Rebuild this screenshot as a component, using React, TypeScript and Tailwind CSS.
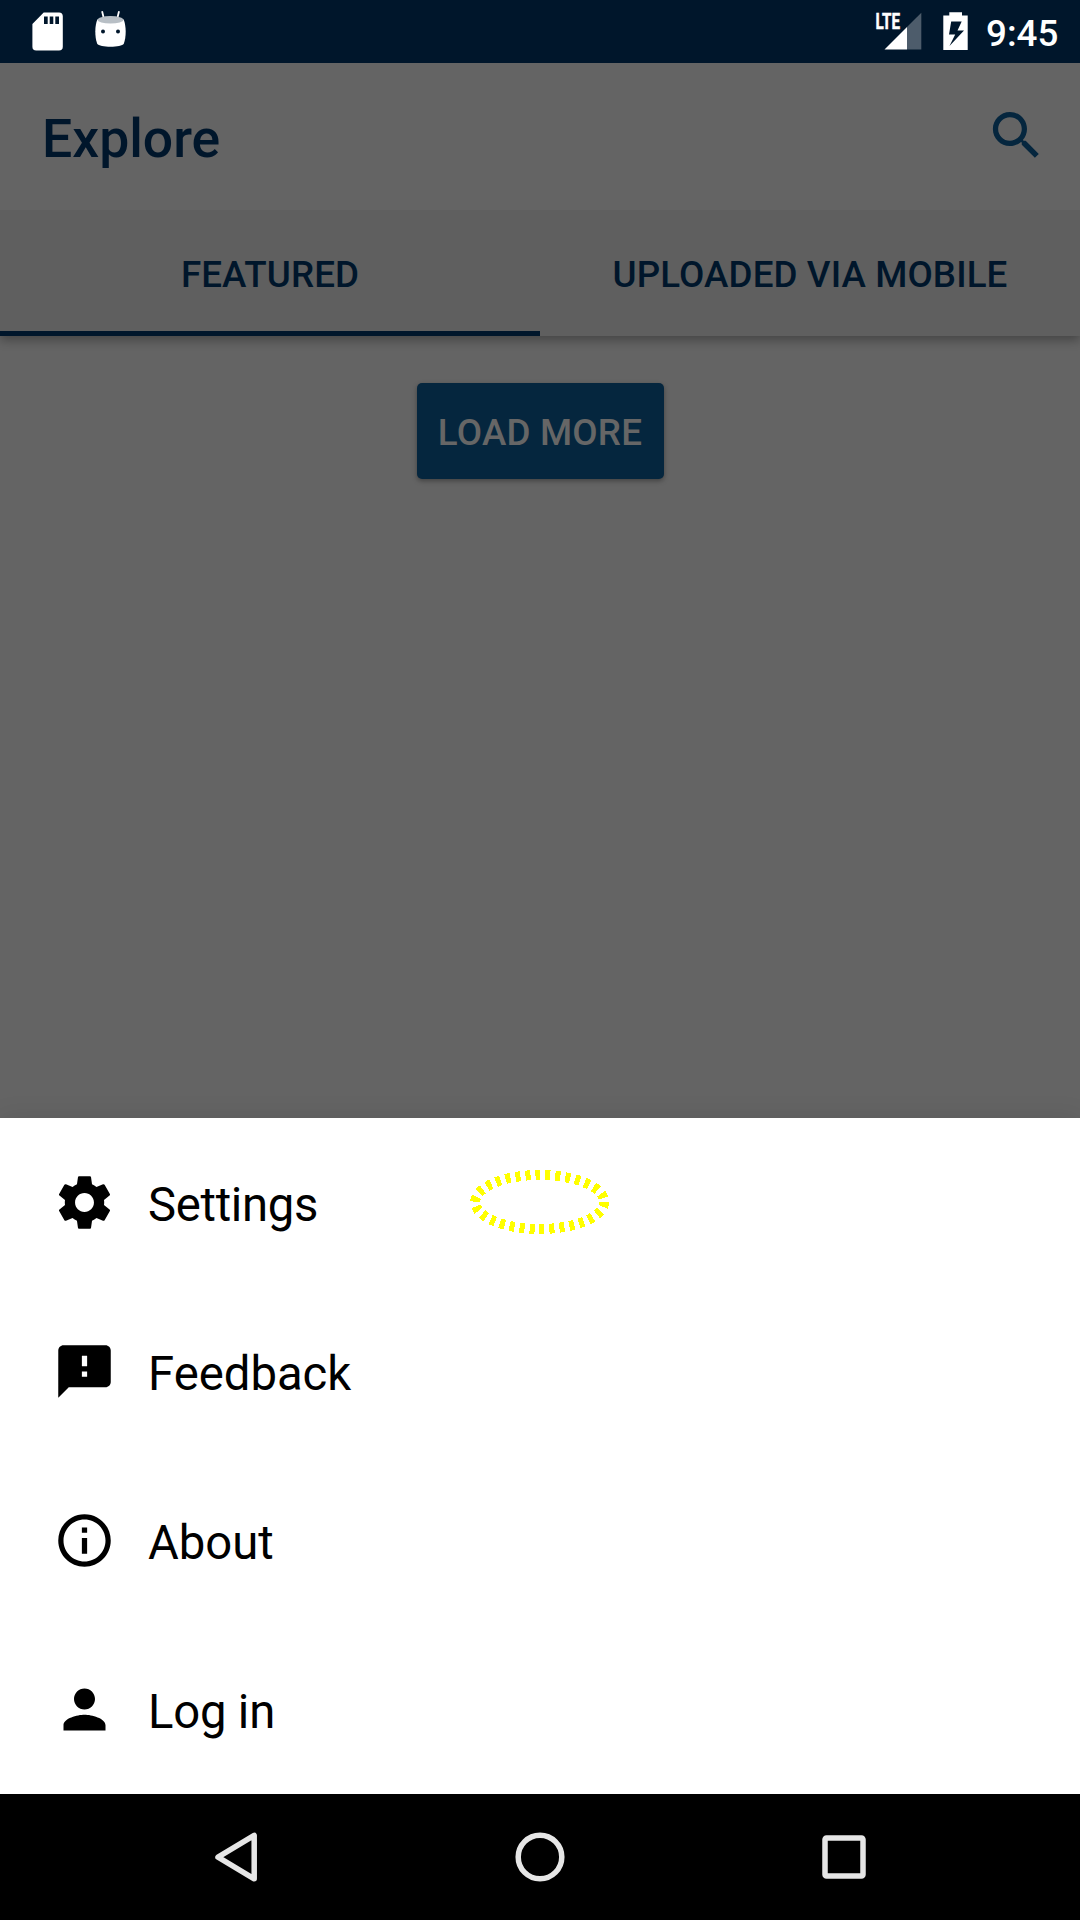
import type { ReactNode } from "react";

function Icon({ className, children }: { className: string; children: ReactNode }) {
  return (
    <svg viewBox="0 0 24 24" fill="currentColor" className={className}>
      {children}
    </svg>
  );
}

function StatusBar() {
  return (
    <header className="flex h-[63px] shrink-0 items-start justify-between bg-[#00162b] text-white">
      <svg width="140" height="63" viewBox="0 0 140 63">
        <path
          fill="#fff"
          fillRule="evenodd"
          d="M43.7 12.5H59a3.8 3.8 0 0 1 3.8 3.8v30.4a3.8 3.8 0 0 1-3.8 3.8H36.2a3.8 3.8 0 0 1-3.8-3.8V23.9zM44 16.5V24h3.7v-7.5zm5.7 0V24h3.6v-7.5zm5.6 0V24H59v-7.5z"
        />
        <path d="M102.200 11.800l1.700 7M118.900 11.800l-1.700 7" stroke="#fff" strokeWidth="1.800" strokeLinecap="round" />
        <path
          fill="#fff"
          d="M97.300 19.500h26.400c1.200 3 2 7.500 2 12 0 4.500-.6 9-1.900 12.200-1.300 2-7 3-13.300 3s-12-1-13.300-3c-1.300-3.200-1.900-7.700-1.900-12.200 0-4.500.8-9 2-12z"
        />
        <ellipse cx="110.500" cy="19.800" rx="13" ry="3.700" fill="#b8bfc5" />
        <circle cx="103" cy="31.500" r="2" fill="#00162b" />
        <circle cx="118" cy="31.500" r="2" fill="#00162b" />
      </svg>
      <div className="flex pr-[25px]">
        <svg width="110" height="63" viewBox="870 0 110 63">
          <text
            x="875.500"
            y="29"
            fill="#fff"
            stroke="#fff"
            strokeWidth="0.500"
            fontSize="21.500"
            fontWeight="700"
            fontFamily="Roboto, sans-serif"
            textLength="24.500"
            lengthAdjust="spacingAndGlyphs"
          >
            LTE
          </text>
          <path d="M907 27L921.300 12.700V49.500H907z" fill="#4d5c6b" />
          <path d="M884.500 49.500L907 27V49.500z" fill="#fff" />
          <path
            fill="#fff"
            fillRule="evenodd"
            d="M949.300 12.300H962V15.500h5.700V50H943.300V15.500h6zM951.200 21.500L949 34.500h6.200L949.500 46 964 30.500h-6.500L961.700 21.500z"
          />
        </svg>
        <span className="mt-[12px] w-[75px] pl-[6px] text-[36.75px] leading-[44px] font-medium">9:45</span>
      </div>
    </header>
  );
}

function Tab({ label, active = false }: { label: string; active?: boolean }) {
  return (
    <button
      className={
        active
          ? "flex flex-1 items-center justify-center border-b-[5px] border-[#00162b] pt-[9px]"
          : "flex flex-1 items-center justify-center border-b-[5px] border-transparent pt-[9px]"
      }
    >
      <span className="text-[36.75px] leading-[44px] font-medium tracking-[0.1px] text-[#00162b]">{label}</span>
    </button>
  );
}

const items = [
  {
    label: "Settings",
    tracking: "tracking-[-0.3px]",
    icon: (
      <path d="M19.430 12.980c.04-.32.07-.64.07-.98s-.03-.66-.07-.98l2.110-1.650c.19-.15.24-.42.12-.64l-2-3.460c-.12-.22-.39-.3-.61-.22l-2.490 1c-.52-.4-1.080-.73-1.690-.98l-.38-2.650C14.460 2.180 14.250 2 14 2h-4c-.25 0-.46.18-.49.42l-.38 2.650c-.61.25-1.170.59-1.690.98l-2.490-1c-.23-.09-.49 0-.61.22l-2 3.460c-.13.22-.07.49.12.64l2.110 1.650c-.04.32-.07.65-.07.98s.03.66.07.98l-2.110 1.650c-.19.15-.24.42-.12.64l2 3.460c.12.22.39.3.61.22l2.490-1c.52.4 1.080.73 1.690.98l.38 2.650c.03.24.24.42.49.42h4c.25 0 .46-.18.49-.42l.38-2.650c.61-.25 1.170-.59 1.690-.98l2.490 1c.23.09.49 0 .61-.22l2-3.460c.12-.22.07-.49-.12-.64l-2.110-1.650zM12 15.600c-1.980 0-3.600-1.620-3.600-3.600s1.620-3.600 3.600-3.600 3.600 1.620 3.600 3.600-1.620 3.600-3.600 3.600z" />
    ),
  },
  {
    label: "Feedback",
    tracking: "tracking-normal",
    icon: (
      <path d="M20 2H4c-1.100 0-1.990.9-1.990 2L2 22l4-4h14c1.100 0 2-.9 2-2V4c0-1.100-.9-2-2-2zm-7 12h-2v-2h2v2zm0-4h-2V6h2v4z" />
    ),
  },
  {
    label: "About",
    tracking: "tracking-normal",
    icon: (
      <path d="M11 17h2v-6h-2v6zm1-15C6.480 2 2 6.480 2 12s4.480 10 10 10 10-4.480 10-10S17.520 2 12 2zm0 18c-4.410 0-8-3.590-8-8s3.590-8 8-8 8 3.590 8 8-3.590 8-8 8zM11 9h2V7h-2v2z" />
    ),
  },
  {
    label: "Log in",
    tracking: "tracking-[-0.2px]",
    icon: (
      <path d="M12 12c2.210 0 4-1.790 4-4s-1.790-4-4-4-4 1.790-4 4 1.790 4 4 4zm0 2c-2.670 0-8 1.340-8 4v2h16v-2c0-2.660-5.330-4-8-4z" />
    ),
  },
];

export default function App() {
  return (
    <div className="flex h-[1920px] w-[1080px] flex-col overflow-hidden bg-[#646464] font-[Roboto,sans-serif]">
      <StatusBar />
      <div className="relative z-10 flex h-[147px] shrink-0 items-center justify-between bg-[#646464] pr-[32px] pl-[42px]">
        <h1 className="mt-[5px] text-[53.5px] leading-[62px] font-medium text-[#00162b]">Explore</h1>
        <Icon className="mb-[2px] size-[63px] text-[#05263e]">
          <path d="M15.500 14h-.79l-.28-.27C15.410 12.590 16 11.110 16 9.500 16 5.910 13.090 3 9.500 3S3 5.910 3 9.500 5.910 16 9.500 16c1.610 0 3.090-.59 4.230-1.570l.27.28v.79l5 4.990L20.490 19l-4.990-5zm-6 0C7.010 14 5 11.990 5 9.500S7.010 5 9.500 5 14 7.010 14 9.500 11.990 14 9.500 14z" />
        </Icon>
      </div>
      <nav className="flex h-[126px] shrink-0 bg-[#5f5f5f] shadow-[0_4px_10px_rgba(0,0,0,0.32)]">
        <Tab label="FEATURED" active />
        <Tab label="UPLOADED VIA MOBILE" />
      </nav>
      <main className="flex flex-1 items-start justify-center pt-[47px]">
        <button className="flex h-24 w-[247px] items-center justify-center rounded-[5px] bg-[#05263e] pt-[3px] text-[36.75px] font-medium tracking-[0.2px] text-[#666666] shadow-[0_2px_5px_rgba(0,0,0,0.35)]">
          LOAD MORE
        </button>
      </main>
      <section className="relative shrink-0 bg-white text-black shadow-[0_0_24px_rgba(0,0,0,0.1)]">
        {items.map((item) => (
          <div key={item.label} className="flex h-[169px] items-center pl-[53px]">
            <Icon className="size-[63px]">{item.icon}</Icon>
            <span className={`mt-[5px] ml-[32px] text-[47.25px] leading-[56px] ${item.tracking}`}>{item.label}</span>
          </div>
        ))}
        <svg className="absolute top-[48px] left-[465px]" width="150" height="72" viewBox="465 1166 150 72">
          <ellipse
            cx="539.700"
            cy="1202"
            rx="64.500"
            ry="27"
            fill="none"
            stroke="#ffff00"
            strokeWidth="10"
            strokeDasharray="5 5"
            shapeRendering="crispEdges"
          />
        </svg>
      </section>
      <footer className="flex h-[126px] shrink-0 items-center justify-center bg-black">
        <svg width="720" height="126" viewBox="180 1794 720 126" fill="none" stroke="#e6e6e6" strokeWidth="5.500" strokeLinejoin="round">
          <path d="M218 1857.200L254.200 1835.300V1878.800z" />
          <circle cx="540" cy="1857" r="21.800" />
          <rect x="825" y="1838" width="38" height="38" rx="1.500" />
        </svg>
      </footer>
    </div>
  );
}
